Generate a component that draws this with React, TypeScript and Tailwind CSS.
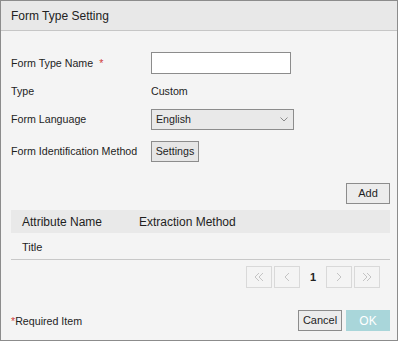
import React from 'react';

const Chevron = ({ dir, double }: { dir: 'left' | 'right'; double?: boolean }) => {
  const pts = (x: number) =>
    dir === 'left' ? `${x + 4},1 ${x},5 ${x + 4},9` : `${x},1 ${x + 4},5 ${x},9`;
  return (
    <svg width="12" height="10" viewBox="0 0 12 10" fill="none" stroke="#c4c4c4" strokeWidth="1">
      {double ? (
        <>
          <polyline points={pts(2)} />
          <polyline points={pts(6)} />
        </>
      ) : (
        <polyline points={pts(4)} />
      )}
    </svg>
  );
};

const PageButton = ({ children }: { children: React.ReactNode }) => (
  <button className="w-[26px] h-[22px] border border-[#d9d9d9] bg-[#f4f4f4] flex items-center justify-center">
    {children}
  </button>
);

export default function App() {
  return (
    <div className="w-[399px] h-[342px] bg-white" style={{ fontFamily: '"Liberation Sans", Arial, sans-serif' }}>
      <div className="w-[398px] h-[341px] border border-[#8c8c8c] bg-[#f4f4f4] flex flex-col text-[#1e1e1e]">
        {/* Header */}
        <div className="h-[30px] shrink-0 bg-[#e8e8e8] border-b border-[#c6c6c6] flex items-center pl-[10px]">
          <span className="text-[12px] text-[#222]">Form Type Setting</span>
        </div>

        <div className="flex flex-col pl-[10px] pr-[7px] text-[10.67px]">
          {/* Form rows */}
          <div className="mt-[21px] h-[22px] flex items-center">
            <div className="w-[140px]">
              <span>Form Type Name</span>
              <span className="ml-[6px] text-[#d03a3a]">*</span>
            </div>
            <input className="w-[140px] h-[22px] bg-white border border-[#8c8c8c] outline-none" />
          </div>

          <div className="mt-[6px] h-[22px] flex items-center">
            <div className="w-[140px]">Type</div>
            <span>Custom</span>
          </div>

          <div className="mt-[6px] h-[22px] flex items-center">
            <div className="w-[140px]">Form Language</div>
            <div className="w-[143px] h-[21px] bg-[#e9e9e9] border border-[#8c8c8c] flex items-center justify-between pl-[4px] pr-[5px]">
              <span>English</span>
              <svg width="8" height="5" viewBox="0 0 8 5" fill="none" stroke="#8a8a8a" strokeWidth="1">
                <polyline points="0.5,0.5 4,4 7.5,0.5" />
              </svg>
            </div>
          </div>

          <div className="mt-[10px] h-[22px] flex items-center">
            <div className="w-[140px]">Form Identification Method</div>
            <button className="w-[48px] h-[21px] bg-[#e6e6e6] border border-[#8c8c8c] text-[10.67px] flex items-center justify-center">
              Settings
            </button>
          </div>

          {/* Add */}
          <div className="mt-[21px] flex justify-end">
            <button className="w-[44px] h-[21px] bg-[#ececec] border border-[#8c8c8c] text-[11px] flex items-center justify-center">
              Add
            </button>
          </div>

          {/* Table */}
          <div className="mt-[6px] h-[23px] bg-[#e9e9e9] flex items-center text-[12px]">
            <div className="w-[128px] pl-[11px]">Attribute Name</div>
            <div>Extraction Method</div>
          </div>
          <div className="h-[27px] border-b border-[#c8c8c8] flex items-center pl-[11px] pt-[2px] text-[11px]">
            Title
          </div>

          {/* Pagination */}
          <div className="mt-[6px] flex justify-end items-center gap-[2px] pr-[10px]">
            <PageButton>
              <Chevron dir="left" double />
            </PageButton>
            <PageButton>
              <Chevron dir="left" />
            </PageButton>
            <div className="w-[22px] text-center text-[11px] font-bold text-[#222]">1</div>
            <PageButton>
              <Chevron dir="right" />
            </PageButton>
            <PageButton>
              <Chevron dir="right" double />
            </PageButton>
          </div>

          {/* Footer */}
          <div className="mt-[22px] h-[21px] flex items-center justify-between">
            <div>
              <span className="text-[#d03a3a]">*</span>
              <span>Required Item</span>
            </div>
            <div className="flex gap-[4px]">
              <button className="w-[44px] h-[21px] bg-[#ececec] border border-[#8c8c8c] text-[11px] flex items-center justify-center">
                Cancel
              </button>
              <button className="w-[44px] h-[21px] bg-[#a9d6da] text-white text-[12px] flex items-center justify-center">
                OK
              </button>
            </div>
          </div>
        </div>
      </div>
    </div>
  );
}
